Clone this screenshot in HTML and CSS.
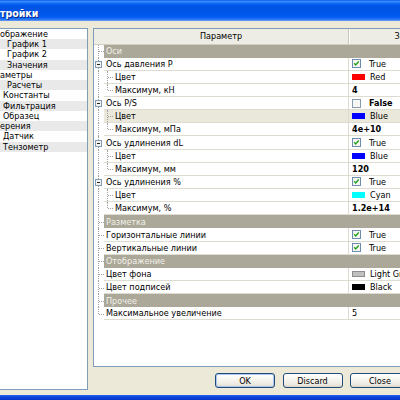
FILE: index.html
```html
<!DOCTYPE html>
<html>
<head>
	<meta charset="UTF-8">
	<title>Настройки</title>
	<link rel="stylesheet" href="styles.css">
</head>
<body>
<div class="win">
	<div class="cap"><span>тройки</span></div>
	<div class="client">
		<ul class="tree">
			<li class="lv0">ображение</li>
			<li class="lv1">График 1</li>
			<li class="lv1">График 2</li>
			<li class="lv1">Значения</li>
			<li class="lv0">аметры</li>
			<li class="lv1">Расчеты</li>
			<li class="lv2">Константы</li>
			<li class="lv2">Фильтрация</li>
			<li class="lv2">Образец</li>
			<li class="lv0">ерения</li>
			<li class="lv2">Датчик</li>
			<li class="lv2">Тензометр</li>
		</ul>
		<div class="side">
			<div class="grid">
				<div class="ghead"><div class="hname">Параметр</div><div class="hval">Значение</div></div>

				<div class="row cat"><div class="mg leaf"></div><div class="nm">Оси</div></div>
				<div class="row"><div class="mg"><svg class="exp" width="7" height="7" viewBox="0 0 7 7"><rect x=".5" y=".5" width="6" height="6" fill="#f4f3ee" stroke="#7f9db9"/><path d="M2 3.5h3" stroke="#222"/></svg></div><div class="nm">Ось давления P</div><div class="vl"><svg class="chk" width="9" height="9" viewBox="0 0 9 9"><rect x=".5" y=".5" width="8" height="8" fill="#f6f6f2" stroke="#6d8cae"/><path d="M2.2 4.3l1.5 1.6 3-3.4" fill="none" stroke="#21a121" stroke-width="1.4"/></svg>True</div></div>
				<div class="row"><div class="mg"></div><div class="nm ch">Цвет</div><div class="vl"><i class="sw" style="background:#ff0000"></i>Red</div></div>
				<div class="row"><div class="mg"></div><div class="nm ch last">Максимум, кН</div><div class="vl b">4</div></div>
				<div class="row"><div class="mg"><svg class="exp" width="7" height="7" viewBox="0 0 7 7"><rect x=".5" y=".5" width="6" height="6" fill="#f4f3ee" stroke="#7f9db9"/><path d="M2 3.5h3" stroke="#222"/></svg></div><div class="nm">Ось P/S</div><div class="vl b"><svg class="chk" width="9" height="9" viewBox="0 0 9 9"><rect x=".5" y=".5" width="8" height="8" fill="#f6f6f2" stroke="#8a9cb0"/></svg>False</div></div>
				<div class="row sel"><div class="mg"></div><div class="nm ch">Цвет</div><div class="vl"><i class="sw" style="background:#0000ff"></i>Blue</div></div>
				<div class="row"><div class="mg"></div><div class="nm ch last">Максимум, мПа</div><div class="vl b">4e+10</div></div>
				<div class="row"><div class="mg"><svg class="exp" width="7" height="7" viewBox="0 0 7 7"><rect x=".5" y=".5" width="6" height="6" fill="#f4f3ee" stroke="#7f9db9"/><path d="M2 3.5h3" stroke="#222"/></svg></div><div class="nm">Ось удлинения dL</div><div class="vl"><svg class="chk" width="9" height="9" viewBox="0 0 9 9"><rect x=".5" y=".5" width="8" height="8" fill="#f6f6f2" stroke="#6d8cae"/><path d="M2.2 4.3l1.5 1.6 3-3.4" fill="none" stroke="#21a121" stroke-width="1.4"/></svg>True</div></div>
				<div class="row"><div class="mg"></div><div class="nm ch">Цвет</div><div class="vl"><i class="sw" style="background:#0000ff"></i>Blue</div></div>
				<div class="row"><div class="mg"></div><div class="nm ch last">Максимум, мм</div><div class="vl b">120</div></div>
				<div class="row"><div class="mg"><svg class="exp" width="7" height="7" viewBox="0 0 7 7"><rect x=".5" y=".5" width="6" height="6" fill="#f4f3ee" stroke="#7f9db9"/><path d="M2 3.5h3" stroke="#222"/></svg></div><div class="nm">Ось удлинения %</div><div class="vl"><svg class="chk" width="9" height="9" viewBox="0 0 9 9"><rect x=".5" y=".5" width="8" height="8" fill="#f6f6f2" stroke="#6d8cae"/><path d="M2.2 4.3l1.5 1.6 3-3.4" fill="none" stroke="#21a121" stroke-width="1.4"/></svg>True</div></div>
				<div class="row"><div class="mg"></div><div class="nm ch">Цвет</div><div class="vl"><i class="sw" style="background:#00ffff"></i>Cyan</div></div>
				<div class="row"><div class="mg"></div><div class="nm ch last">Максимум, %</div><div class="vl b">1.2e+14</div></div>

				<div class="row cat"><div class="mg leaf"></div><div class="nm">Разметка</div></div>
				<div class="row"><div class="mg leaf"></div><div class="nm">Горизонтальные линии</div><div class="vl"><svg class="chk" width="9" height="9" viewBox="0 0 9 9"><rect x=".5" y=".5" width="8" height="8" fill="#f6f6f2" stroke="#6d8cae"/><path d="M2.2 4.3l1.5 1.6 3-3.4" fill="none" stroke="#21a121" stroke-width="1.4"/></svg>True</div></div>
				<div class="row"><div class="mg leaf"></div><div class="nm">Вертикальные линии</div><div class="vl"><svg class="chk" width="9" height="9" viewBox="0 0 9 9"><rect x=".5" y=".5" width="8" height="8" fill="#f6f6f2" stroke="#6d8cae"/><path d="M2.2 4.3l1.5 1.6 3-3.4" fill="none" stroke="#21a121" stroke-width="1.4"/></svg>True</div></div>

				<div class="row cat"><div class="mg leaf"></div><div class="nm">Отображение</div></div>
				<div class="row"><div class="mg leaf"></div><div class="nm">Цвет фона</div><div class="vl"><i class="sw lt" style="background:#c0c0c0"></i>Light Gray</div></div>
				<div class="row"><div class="mg leaf"></div><div class="nm">Цвет подписей</div><div class="vl"><i class="sw" style="background:#000000"></i>Black</div></div>

				<div class="row cat"><div class="mg leaf"></div><div class="nm">Прочее</div></div>
				<div class="row"><div class="mg leaf end"></div><div class="nm">Максимальное увеличение</div><div class="vl">5</div></div>
			</div>
			<div class="btns">
				<button class="def">OK</button>
				<button>Discard</button>
				<button>Close</button>
			</div>
		</div>
	</div>
	<div class="foot"></div>
</div>
</body>
</html>
```

FILE: styles.css
```css
body { margin: 0; width: 400px; height: 400px; overflow: hidden; background: #ECE9D8;
	font-family: "DejaVu Sans Condensed", "Liberation Sans", sans-serif; font-size: 9px; color: #000; }
.win { display: flex; flex-direction: column; height: 400px; width: 400px; overflow: hidden; }

.cap { height: 21px; flex: none; box-sizing: border-box; padding-top: 4px; display: flex; align-items: center;
	background: linear-gradient(#0a5cf0 0%, #3d8dff 8%, #0862f4 18%, #0054e3 30%, #0055e8 62%, #005ef4 82%, #2a74f2 92%, #6a9ef2 100%);
	color: #fff; font-size: 10.5px; font-weight: bold; text-shadow: 1px 1px 0 #0a2a8a; }

.client { flex: 1; min-height: 0; display: flex; gap: 5px; padding: 7px 0 5px; background: #ECE9D8; }

.tree { margin: 0; padding: 0; list-style: none; flex: none; width: 87px; background: #fff;
	border: 1px solid #7F9DB9; border-left: 0; overflow: hidden; }
.tree li { height: 10.24px; line-height: 10.24px; white-space: nowrap; }
.tree li:nth-child(even) { background: #E9E9E9; }
.tree .lv0 { padding-left: 0; }
.tree .lv1 { padding-left: 7px; }
.tree .lv2 { padding-left: 3px; }

.side { flex: none; width: 389px; display: flex; flex-direction: column; gap: 6px; padding-bottom: 2px; }
.grid { flex: 1; min-height: 0; background: #fff; border: 1px solid #7F9DB9; overflow: hidden; }

.ghead { display: flex; height: 15.5px; box-sizing: border-box; background: #EEEDE5; border-bottom: 1px solid #D3CFC0; }
.ghead > div { display: flex; align-items: center; justify-content: center; }
.hname { width: 254px; flex: none; }
.hval { flex: 1; border-left: 1px solid #CBC7B8; box-shadow: inset 1px 0 #fff; }

.row { display: flex; height: 13.15px; }
.row > div { box-sizing: border-box; display: flex; align-items: center; white-space: nowrap; }
.mg { width: 10px; flex: none; position: relative; }
.mg::before { content: ""; position: absolute; left: 4px; top: 0; bottom: 0; border-left: 1px dotted #A0A0A0; }
.mg.end::before { bottom: 50%; }
.mg.leaf::after { content: ""; position: absolute; left: 5px; width: 5px; top: 50%; border-top: 1px dotted #A0A0A0; }
.exp { position: relative; margin-left: 1px; }

.nm { width: 244px; flex: none; padding-left: 2px; border-bottom: 1px solid #DEDBD0; position: relative; }
.nm.ch { padding-left: 11px; }
.nm.ch::before { content: ""; position: absolute; left: 3px; top: 0; bottom: 0; border-left: 1px dotted #A0A0A0; }
.nm.ch.last::before { bottom: 50%; }
.nm.ch::after { content: ""; position: absolute; left: 4px; width: 5px; top: 50%; border-top: 1px dotted #A0A0A0; }
.vl { flex: 1; padding-left: 3px; border-left: 1px solid #DEDBD0; border-bottom: 1px solid #DEDBD0; }
.vl.b { font-weight: bold; }
.chk { margin-right: 8px; flex: none; }
.sw { width: 13px; height: 6px; margin-right: 5px; flex: none; display: block; }
.sw.lt { box-sizing: border-box; border: 1px solid #8C8C8C; }

.row.cat .nm { flex: 1; width: auto; background: #ACA899; color: #F2F1EA; border-bottom: 0; }
.row.sel .nm, .row.sel .vl { background: #EAE7DB; }

.btns { height: 15px; flex: none; display: flex; gap: 7.5px; padding-left: 122px; }
.btns button { width: 60px; height: 15px; padding: 0; margin: 0; font: inherit; color: #000;
	border: 1px solid #1F4A7A; border-radius: 3px;
	background: linear-gradient(#ffffff, #f5f4ef 45%, #ebe9e0 80%, #d8d3c6); }
.btns button.def { box-shadow: inset 0 0 0 1px #a9c6f0; }

.foot { height: 5px; flex: none; background: linear-gradient(#2d66ec, #0a44dc 40%, #0636c8); }
```
